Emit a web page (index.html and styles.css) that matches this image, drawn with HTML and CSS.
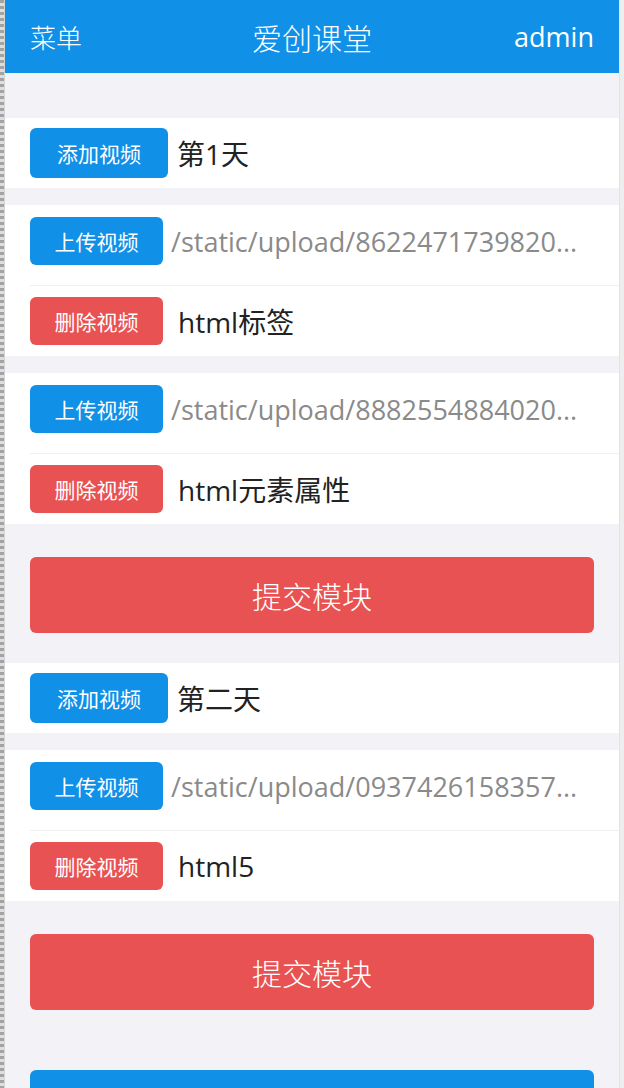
FILE: index.html
```html
<!DOCTYPE html>
<html lang="zh-CN">
<head>
<meta charset="utf-8">
<title>爱创课堂</title>
<link rel="stylesheet" href="styles.css">
</head>
<body>
<div class="frame">
  <div class="edge-left"></div>
  <div class="app">
    <header class="topbar">
      <span class="topbar-side">菜单</span>
      <span class="topbar-title">爱创课堂</span>
      <span class="topbar-side topbar-user">admin</span>
    </header>
    <main class="content">
      <section class="module">
        <div class="day-row">
          <button class="btn btn-blue btn-add">添加视频</button>
          <span class="day-name">第1天</span>
        </div>
        <div class="video-card">
          <div class="row upload-row">
            <button class="btn btn-blue">上传视频</button>
            <span class="path">/static/upload/8622471739820...</span>
          </div>
          <div class="row delete-row">
            <button class="btn btn-red">删除视频</button>
            <span class="video-name">html标签</span>
          </div>
        </div>
        <div class="video-card">
          <div class="row upload-row">
            <button class="btn btn-blue">上传视频</button>
            <span class="path">/static/upload/8882554884020...</span>
          </div>
          <div class="row delete-row">
            <button class="btn btn-red">删除视频</button>
            <span class="video-name">html元素属性</span>
          </div>
        </div>
        <div class="submit-wrap">
          <button class="btn-submit">提交模块</button>
        </div>
      </section>
      <section class="module">
        <div class="day-row">
          <button class="btn btn-blue btn-add">添加视频</button>
          <span class="day-name">第二天</span>
        </div>
        <div class="video-card">
          <div class="row upload-row">
            <button class="btn btn-blue">上传视频</button>
            <span class="path">/static/upload/0937426158357...</span>
          </div>
          <div class="row delete-row">
            <button class="btn btn-red">删除视频</button>
            <span class="video-name">html5</span>
          </div>
        </div>
        <div class="submit-wrap">
          <button class="btn-submit">提交模块</button>
        </div>
      </section>
      <div class="bottom-wrap">
        <button class="btn-add-module">添加模块</button>
      </div>
    </main>
  </div>
  <div class="edge-right"></div>
</div>
</body>
</html>
```
FILE: styles.css
```css
* { box-sizing: border-box; }
html, body { margin: 0; padding: 0; }
body {
  font-family: "Open Sans", "Noto Sans CJK SC", sans-serif;
  background: #f3f3f7;
  overflow: hidden;
}
.frame {
  display: flex;
  width: 624px;
  min-height: 1088px;
}
.edge-left {
  width: 5px;
  flex: none;
  background: repeating-linear-gradient(to bottom, #a3a3a3 0 3px, #dedede 3px 6px);
  border-right: 1px solid #d4d4d4;
}
.edge-right {
  width: 5px;
  flex: none;
  background: #eeeeee;
  border-left: 1px solid #e3e3e3;
}
.app {
  flex: 1;
  min-width: 0;
  background: #f3f3f7;
}
.topbar {
  height: 73px;
  background: #1190e7;
  color: #fff;
  display: flex;
  align-items: center;
  justify-content: space-between;
  padding: 0 25px;
  font-family: "Noto Sans CJK SC", sans-serif;
}
.topbar-side {
  font-size: 26px;
  line-height: 30px;
  font-weight: 300;
  width: 100px;
}
.topbar-user {
  text-align: right;
  font-family: "Open Sans", sans-serif;
  font-size: 27px;
  font-weight: 400;
}
.topbar-title {
  font-size: 30px;
  line-height: 30px;
  font-weight: 300;
}
.content {
  padding-top: 45px;
}
.module {
  display: flex;
  flex-direction: column;
  gap: 17px;
}
.day-row {
  background: #fff;
  height: 70px;
  display: flex;
  align-items: center;
  padding-left: 25px;
}
.btn {
  border: none;
  border-radius: 6px;
  color: #fff;
  font-family: "Noto Sans CJK SC", sans-serif;
  font-size: 21px;
  font-weight: 400;
  height: 48px;
  width: 133px;
  padding: 0;
  flex: none;
}
.btn-add { height: 50px; width: 138px; }
.btn-blue { background: #1190e7; }
.btn-red { background: #e95252; }
.day-name {
  margin-left: 9px;
  font-size: 28px;
  color: #222;
}
.video-card {
  background: #fff;
}
.row {
  display: flex;
  align-items: center;
}
.upload-row {
  padding: 12px 25px 20px 25px;
}
.delete-row {
  margin-left: 25px;
  border-top: 1px solid #f0f0f2;
  padding: 11px 0 11px 0;
}
.path {
  margin-left: 8px;
  font-size: 27px;
  color: #8a8a8a;
  white-space: nowrap;
}
.video-name {
  margin-left: 15px;
  font-size: 28px;
  color: #222;
}
.submit-wrap {
  padding: 16px 25px 30px;
}
.btn-submit {
  display: block;
  width: 100%;
  height: 76px;
  border: none;
  border-radius: 6px;
  background: #e95252;
  color: #fff;
  font-family: "Noto Sans CJK SC", sans-serif;
  font-size: 30px;
  font-weight: 300;
}
.bottom-wrap {
  padding: 30px 25px 30px;
}
.btn-add-module {
  display: block;
  width: 100%;
  height: 76px;
  border: none;
  border-radius: 6px;
  background: #1190e7;
  color: #fff;
  font-family: "Noto Sans CJK SC", sans-serif;
  font-size: 30px;
}
```
